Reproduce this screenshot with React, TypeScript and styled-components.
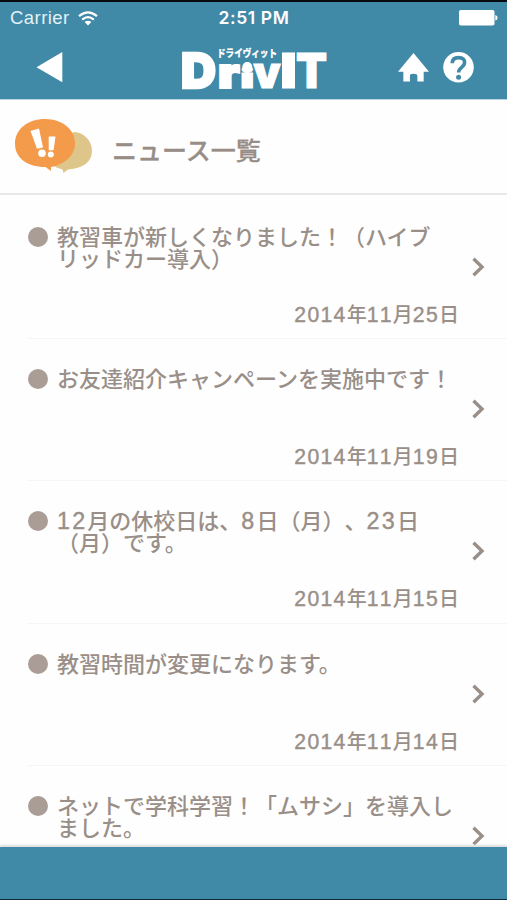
import React from 'react';
import styled, { createGlobalStyle } from 'styled-components';

const GlobalStyle = createGlobalStyle`
  * { box-sizing: border-box; }
  body {
    margin: 0;
    background: #fefefe;
    font-family: "Noto Sans CJK JP", sans-serif;
    text-spacing-trim: space-all;
  }
  svg { display: block; }
`;

const Screen = styled.div`
  width: 507px;
  height: 900px;
  display: flex;
  flex-direction: column;
  overflow: hidden;
  background: #fefefe;
  border-top: 2px solid #070b0e;
  border-bottom: 1px solid #0b2a3a;
`;

const Header = styled.header`
  flex: none;
  height: 98px;
  background: #4089a7;
  border-bottom: 1px solid #b5d5e3;
  color: #fff;
`;

const StatusBar = styled.div`
  display: grid;
  grid-template-columns: 1fr auto 1fr;
  align-items: center;
  height: 32px;
  padding: 0 9px 0 10px;
  font: 18.5px/32px "Liberation Sans", sans-serif;
`;

const Carrier = styled.div`
  display: flex;
  align-items: center;
  gap: 8px;
  letter-spacing: 0.45px;
  color: #e4f1f7;
`;

const Clock = styled.div`
  font: 600 17.5px/32px Inter, sans-serif;
  letter-spacing: 0.6px;
`;

const BatterySlot = styled.div`
  justify-self: end;
`;

const NavBar = styled.nav`
  display: grid;
  grid-template-columns: 182px 146px 1fr;
  height: 65px;
`;

const BackButton = styled.button`
  width: 27px;
  height: 31px;
  margin: 18px 0 0 36px;
  padding: 0;
  border: 0;
  background: none;
`;

const Brand = styled.div`
  padding-top: 12px;

  svg { overflow: visible; }
`;

const Actions = styled.div`
  display: flex;
  gap: 14px;
  padding: 18px 0 0 70px;
`;

const Heading = styled.section`
  flex: none;
  display: flex;
  align-items: center;
  height: 95px;
  padding: 1px 0 0 14px;
  gap: 19px;
  border-bottom: 2px solid #e8e8e8;
`;

const HeadingText = styled.h1`
  margin: 4px 0 0;
  font-size: 25px;
  line-height: 30px;
  font-weight: 500;
  color: #978d86;
  -webkit-text-stroke: 0.3px currentColor;
`;

const List = styled.ul`
  flex: 1;
  min-height: 0;
  overflow: hidden;
  margin: 0;
  padding: 2px 0 0;
  list-style: none;
`;

const Row = styled.li`
  display: grid;
  grid-template-columns: 29px 402px 1fr;
  height: 142.2px;
  margin-left: 28px;
  padding-top: 29px;
  border-bottom: 1px solid #f6f6f5;
  color: #998f88;
`;

const Bullet = styled.span`
  width: 20px;
  height: 20px;
  margin-top: 1px;
  border-radius: 50%;
  background: #a99d96;
`;

const Body = styled.div`
  display: flex;
  flex-direction: column;
`;

const Title = styled.p`
  height: 68px;
  margin: -2px 0 0;
  font-size: 22px;
  line-height: 22px;
  font-weight: 500;
  white-space: pre;
`;

const DateText = styled.time`
  align-self: flex-end;
  font-size: 20px;
  line-height: 44px;
  font-weight: 500;
  white-space: nowrap;
`;

const Digits = styled.span<{ $gap: number }>`
  font-family: "Liberation Sans", sans-serif;
  font-size: 1.06em;
  line-height: 1px;
  font-weight: 400;
  font-kerning: none;
  letter-spacing: ${({ $gap }) => $gap}px;
  -webkit-text-stroke: 0.4px currentColor;
`;

const Arrow = styled.div`
  padding: 31px 0 0 13px;
`;

const Footer = styled.footer`
  flex: none;
  height: 52px;
  background: #4089a7;
  box-shadow: 0 -2px 2px #dddddd;
`;

const news = [
  { title: '教習車が新しくなりました！（ハイブ\nリッドカー導入）', date: '2014年11月25日' },
  { title: 'お友達紹介キャンペーンを実施中です！', date: '2014年11月19日' },
  { title: '12月の休校日は、8日（月）、23日\n（月）です。', date: '2014年11月15日' },
  { title: '教習時間が変更になります。', date: '2014年11月14日' },
  { title: 'ネットで学科学習！「ムサシ」を導入し\nました。', date: '' },
];

const Mixed = ({ text, gap }: { text: string; gap: number }) => (
  <>
    {text.split(/(\d+)/).map((part, i) => (/^\d/.test(part) ? <Digits key={i} $gap={gap}>{part}</Digits> : part))}
  </>
);

const Wifi = () => (
  <svg width="20" height="15" viewBox="0 0 20 15" fill="none" stroke="#fff" strokeWidth="2.2">
    <path d="M1 5.2Q10-2.6 19 5.2M4.2 8.6Q10 3.6 15.8 8.6" />
    <path d="M6.6 11.1Q10 8.4 13.4 11.1L10 14.5Z" fill="#fff" stroke="none" />
  </svg>
);

const Battery = () => (
  <svg width="39" height="16" viewBox="0 0 39 16" fill="#fff">
    <rect width="35.5" height="15.5" rx="1.8" />
    <path d="M36.3 5Q38.6 5.4 38.6 7.8T36.3 10.6Z" />
  </svg>
);

const Logo = () => (
  <svg width="146" height="46" viewBox="182 46 146 46" fill="#fff" stroke="#fff" fontFamily="Inter, sans-serif" fontWeight="900">
    <g strokeWidth="1.2" fontSize="48">
      <text x="181" y="87.5" strokeWidth="2.4" textLength="35" lengthAdjust="spacingAndGlyphs">D</text>
      <text x="218" y="87.5" fontSize="42" strokeWidth="2.2" textLength="21.5" lengthAdjust="spacingAndGlyphs">r</text>
      <text x="240.3" y="88" fontSize="27" textLength="14" lengthAdjust="spacingAndGlyphs">i</text>
      <circle cx="247.3" cy="67" r="4.4" />
      <text x="253.5" y="87.5" fontSize="43" textLength="27" lengthAdjust="spacingAndGlyphs">v</text>
      <text x="280" y="87.5" textLength="17" lengthAdjust="spacingAndGlyphs">I</text>
      <text x="296" y="87.5" textLength="31" lengthAdjust="spacingAndGlyphs">T</text>
    </g>
    <text x="217" y="57" fontFamily="'Noto Sans CJK JP', sans-serif" fontSize="10.5" strokeWidth="0.2" textLength="60" lengthAdjust="spacingAndGlyphs">ドライヴィット</text>
  </svg>
);

const Home = () => (
  <svg width="31" height="31" viewBox="0 0 32 31" fill="#fff">
    <path d="M16 0.5L32 20H26.5V30H20V24.5Q20 22 16 22T12.3 24.5V30H5.5V20H0Z" />
  </svg>
);

const Help = () => (
  <svg width="31" height="31" viewBox="0 0 31 31">
    <circle cx="15.5" cy="15.3" r="15.3" fill="#fff" />
    <path d="M9.2 11.2Q9.3 5.6 15.5 5.6T21.6 10.8C21.6 15.1 15.6 15.2 15.6 20.6" fill="none" stroke="#4089a7" strokeWidth="3.6" />
    <circle cx="15.6" cy="25.2" r="2.5" fill="#4089a7" />
  </svg>
);

const Bubbles = () => (
  <svg width="79" height="56" viewBox="0 0 79 56">
    <path d="M60 13C70 13 78 22 78 32C78 42 70 49.5 54 50.5L49.5 54L48.5 50.5Q43 49 38 46L44 20Z" fill="#dec58a" />
    <path d="M31 0C49 0 61 11 61 24C61 37 51 45 37 48V52L31.5 48C12 48 1 38 1 25C1 10 14 0 31 0Z" fill="#f39b4b" />
    <path d="M16.5 12L25 9.5L29 28.5L23 29.8ZM34.7 17.5H41.5L39.6 31.2H34.7Z" fill="#fff" />
    <circle cx="28" cy="34.2" r="3.8" fill="#fff" />
    <circle cx="36.8" cy="35.5" r="3" fill="#fff" />
  </svg>
);

export default function App() {
  return (
    <>
      <GlobalStyle />
      <Screen lang="ja">
        <Header>
          <StatusBar>
            <Carrier>Carrier<Wifi /></Carrier>
            <Clock>2:51 PM</Clock>
            <BatterySlot><Battery /></BatterySlot>
          </StatusBar>
          <NavBar>
            <BackButton aria-label="戻る">
              <svg width="27" height="31" fill="#fff"><path d="M0.5 15.3L26.3 0V30.3Z" /></svg>
            </BackButton>
            <Brand><Logo /></Brand>
            <Actions><Home /><Help /></Actions>
          </NavBar>
        </Header>
        <Heading>
          <Bubbles />
          <HeadingText>ニュース一覧</HeadingText>
        </Heading>
        <List>
          {news.map((item) => (
            <Row key={item.title}>
              <Bullet />
              <Body>
                <Title><Mixed text={item.title} gap={2.2} /></Title>
                {item.date && <DateText><Mixed text={item.date} gap={1.3} /></DateText>}
              </Body>
              <Arrow>
                <svg width="14" height="20" viewBox="0 0 14 20" fill="none" stroke="#998f88" strokeWidth="3.4">
                  <path d="M1.5 1.8L10 10L1.5 18.2" />
                </svg>
              </Arrow>
            </Row>
          ))}
        </List>
        <Footer />
      </Screen>
    </>
  );
}
